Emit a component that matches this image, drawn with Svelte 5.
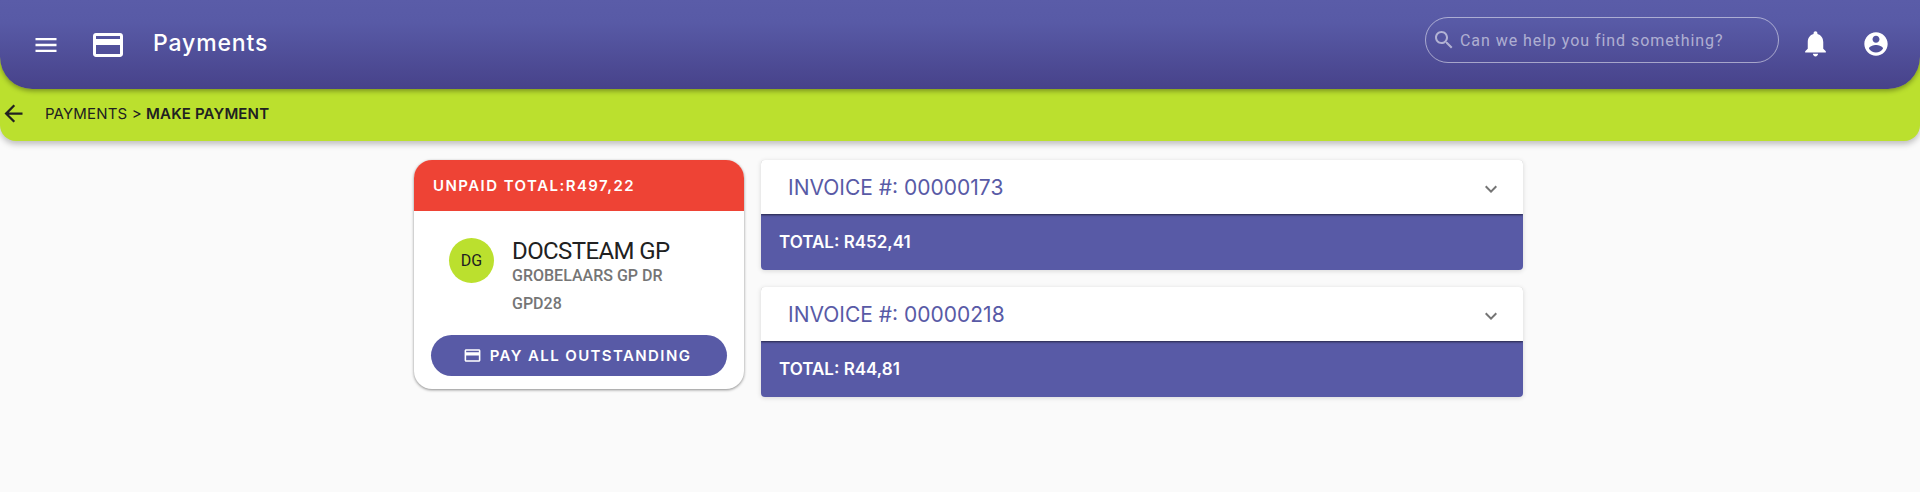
<script>
  const invoices = [
    { no: '00000173', total: 'R452,41' },
    { no: '00000218', total: 'R44,81' }
  ];
</script>

<div class="page">
  <div class="topband">
    <header class="toolbar">
      <svg class="menu" viewBox="0 0 24 24" width="28" height="28"><path fill="#fff" d="M3 18h18v-2H3v2zm0-5h18v-2H3v2zm0-7v2h18V6H3z"/></svg>
      <svg class="cardicon" viewBox="0 0 24 24" width="36" height="36"><path fill="#fff" d="M20 4H4c-1.11 0-1.99.89-1.99 2L2 18c0 1.11.89 2 2 2h16c1.11 0 2-.89 2-2V6c0-1.11-.89-2-2-2zm0 14H4v-6h16v6zm0-10H4V6h16v2z"/></svg>
      <span class="title">Payments</span>
      <div class="search">
        <svg viewBox="0 0 24 24" width="24" height="24"><path fill="#fff" d="M15.5 14h-.79l-.28-.27C15.41 12.59 16 11.11 16 9.5 16 5.91 13.09 3 9.5 3S3 5.91 3 9.5 5.91 16 9.5 16c1.61 0 3.09-.59 4.23-1.57l.27.28v.79l5 4.99L20.49 19l-4.99-5zm-6 0C7.01 14 5 11.99 5 9.5S7.01 5 9.5 5 14 7.01 14 9.5 11.99 14 9.5 14z"/></svg>
        <span>Can we help you find something?</span>
      </div>
      <svg class="bell" viewBox="0 0 24 24" width="31" height="31"><path fill="#fff" d="M12 22c1.1 0 2-.9 2-2h-4c0 1.1.89 2 2 2zm6-6v-5c0-3.07-1.64-5.64-4.5-6.32V4c0-.83-.67-1.5-1.5-1.5s-1.5.67-1.5 1.5v.68C7.63 5.36 6 7.92 6 11v5l-2 2v1h16v-1l-2-2z"/></svg>
      <svg class="user" viewBox="0 0 24 24" width="28" height="28"><path fill="#fff" d="M12 2C6.48 2 2 6.48 2 12s4.48 10 10 10 10-4.48 10-10S17.52 2 12 2zm0 3c1.66 0 3 1.34 3 3s-1.34 3-3 3-3-1.34-3-3 1.34-3 3-3zm0 14.2c-2.5 0-4.71-1.28-6-3.22.03-1.99 4-3.08 6-3.08 1.99 0 5.97 1.09 6 3.08-1.29 1.94-3.5 3.22-6 3.22z"/></svg>
    </header>
    <nav class="crumbs">
      <svg viewBox="0 0 24 24" width="27" height="27"><path fill="#212121" d="M20 11H7.83l5.59-5.59L12 4l-8 8 8 8 1.41-1.41L7.83 13H20v-2z"/></svg>
      <span class="path">PAYMENTS &gt; <b>MAKE PAYMENT</b></span>
    </nav>
  </div>

  <main class="content">
    <section class="summary">
      <div class="unpaid">UNPAID TOTAL:R497,22</div>
      <div class="doctor">
        <div class="avatar">DG</div>
        <div class="info">
          <div class="name">DOCSTEAM GP</div>
          <div class="sub">GROBELAARS GP DR</div>
          <div class="sub second">GPD28</div>
        </div>
      </div>
      <button class="pay">
        <svg viewBox="0 0 24 24" width="19" height="19"><path fill="#fff" d="M20 4H4c-1.11 0-1.99.89-1.99 2L2 18c0 1.11.89 2 2 2h16c1.11 0 2-.89 2-2V6c0-1.11-.89-2-2-2zm0 14H4v-6h16v6zm0-10H4V6h16v2z"/></svg>
        PAY ALL OUTSTANDING
      </button>
    </section>

    <section class="invoices">
      {#each invoices as inv}
        <article class="invoice">
          <div class="inv-head">
            <span>INVOICE #: {inv.no}</span>
            <svg class="chev" viewBox="0 0 24 24" width="24" height="24"><path fill="#757575" d="M16.59 8.59 12 13.17 7.41 8.59 6 10l6 6 6-6z"/></svg>
          </div>
          <div class="inv-total">TOTAL: {inv.total}</div>
        </article>
      {/each}
    </section>
  </main>
</div>

<style>
  :global(body) {
    margin: 0;
    background: #fafafa;
  }
  .page {
    height: 492px;
    overflow: hidden;
    background: #fafafa;
    font-family: "Inter", "Noto Sans", sans-serif;
  }
  .topband {
    background: #bbe02e;
    border-radius: 0 0 16px 16px;
    box-shadow: 0 3px 6px rgba(0, 0, 0, 0.25);
  }
  .toolbar {
    height: 89px;
    display: flex;
    align-items: center;
    box-sizing: border-box;
    padding: 0 30px 0 32px;
    color: #fff;
    background: linear-gradient(180deg, #5a5ca8 0%, #585aa6 25%, #47428a 100%);
    border-radius: 0 0 32px 32px;
    box-shadow: 0 2px 5px rgba(0, 0, 0, 0.35);
  }
  .menu { margin-right: 30px; }
  .cardicon { margin-right: 27px; }
  .title {
    font-size: 23px;
    font-weight: 500;
    letter-spacing: 0.85px;
    flex: 1;
    margin-top: -3px;
  }
  .search {
    width: 354px;
    height: 46px;
    box-sizing: border-box;
    display: flex;
    align-items: center;
    gap: 4px;
    padding: 0 6px;
    border: 1px solid rgba(255, 255, 255, 0.5);
    border-radius: 23px;
    margin: -9px 21px 0 0;
    font-family: "Roboto", sans-serif;
    font-size: 16px;
    letter-spacing: 0.94px;
    color: rgba(255, 255, 255, 0.55);
  }
  .search svg { opacity: 0.55; flex: none; }
  .bell { margin: -2px 31px 0 0; }
  .user { margin-top: -2px; }
  .crumbs {
    height: 52px;
    box-sizing: border-box;
    padding-bottom: 4px;
    display: flex;
    align-items: center;
    gap: 18px;
    color: #212121;
    font-size: 15px;
    letter-spacing: 0.15px;
  }
  .path b { font-weight: 600; }
  .content {
    display: flex;
    align-items: flex-start;
    gap: 17px;
    margin: 19px 0 0 414px;
    width: 1110px;
  }
  .summary {
    width: 330px;
    height: 229px;
    box-sizing: border-box;
    background: #fff;
    border-radius: 18px;
    overflow: hidden;
    box-shadow: 0 1px 3px rgba(0, 0, 0, 0.45);
    display: flex;
    flex-direction: column;
  }
  .unpaid {
    height: 51px;
    box-sizing: border-box;
    padding: 0 19px;
    display: flex;
    align-items: center;
    background: #ee4335;
    color: #fff;
    font-weight: 600;
    font-size: 15px;
    letter-spacing: 1.45px;
  }
  .doctor {
    display: flex;
    padding: 27px 0 0 35px;
    gap: 18px;
    font-family: "Roboto", sans-serif;
  }
  .avatar {
    width: 45px;
    height: 45px;
    border-radius: 50%;
    background: #bbe02e;
    color: #212121;
    display: flex;
    align-items: center;
    justify-content: center;
    font-size: 16px;
    flex: none;
  }
  .name {
    font-size: 24px;
    line-height: 24px;
    letter-spacing: -0.6px;
    color: #212121;
    margin-top: 1px;
  }
  .sub {
    font-size: 16px;
    font-weight: 500;
    line-height: 20px;
    color: #757575;
    margin-top: 3px;
  }
  .sub.second { margin-top: 8px; }
  .pay {
    margin: auto 17px 13px;
    height: 41px;
    border: 0;
    border-radius: 21px;
    background: #585aa6;
    color: #fff;
    font-family: "Inter", sans-serif;
    font-size: 15px;
    font-weight: 600;
    letter-spacing: 1.4px;
    display: flex;
    align-items: center;
    justify-content: center;
    gap: 8px;
    padding: 0 4px 0 0;
  }
  .invoices {
    width: 762px;
    display: flex;
    flex-direction: column;
    gap: 17px;
  }
  .invoice {
    border-radius: 4px;
    overflow: hidden;
    box-shadow: 0 1px 5px rgba(0, 0, 0, 0.14);
  }
  .inv-head {
    height: 54px;
    box-sizing: border-box;
    background: #fff;
    display: flex;
    align-items: center;
    justify-content: space-between;
    padding: 0 20px 0 27px;
    color: #585aa6;
    font-size: 21px;
    box-shadow: 0 1px 2px rgba(0, 0, 0, 0.6);
    position: relative;
  }
  .chev { margin-top: 4px; }
  .inv-total {
    height: 56px;
    box-sizing: border-box;
    background: #585aa6;
    color: #fff;
    display: flex;
    align-items: center;
    padding-left: 18px;
    font-size: 17px;
    font-weight: 600;
  }
</style>
